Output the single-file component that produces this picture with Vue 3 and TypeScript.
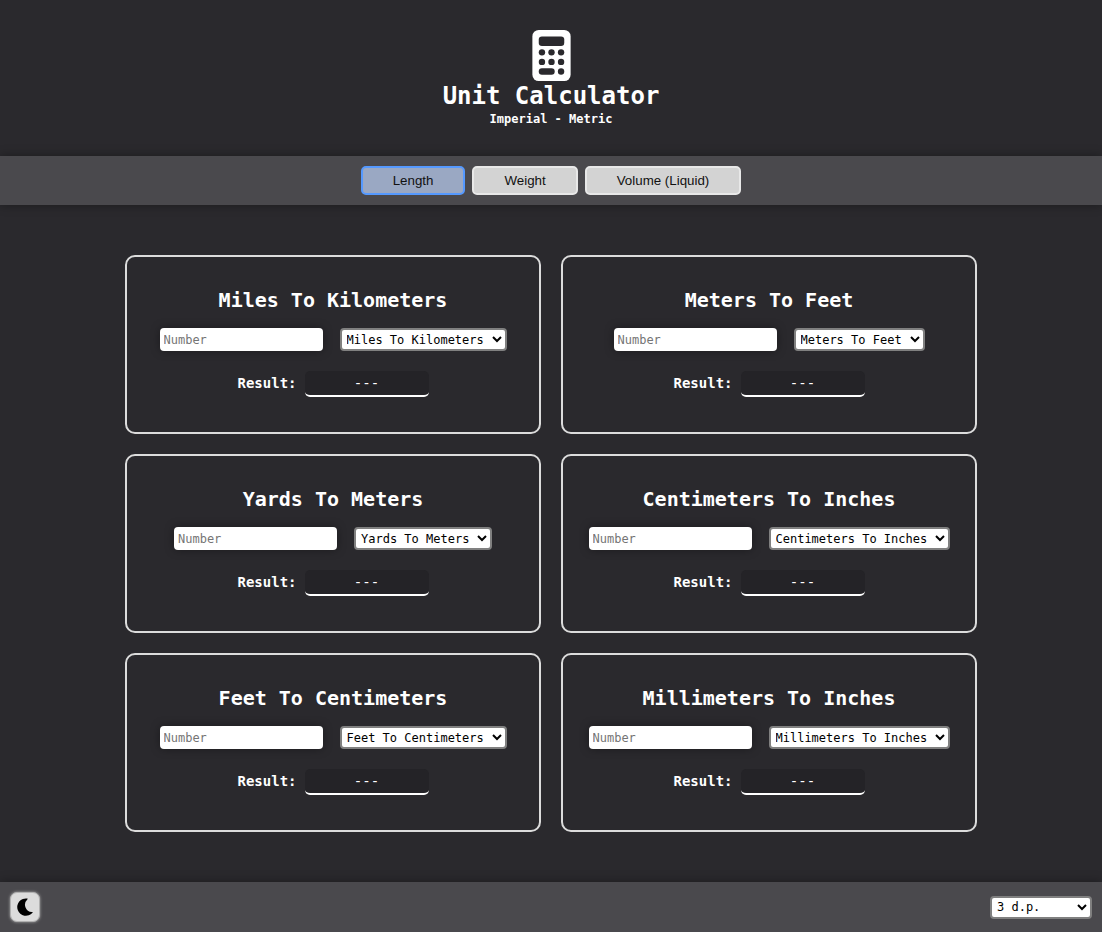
<script setup lang="ts">
import { computed, reactive, ref } from 'vue'

interface Conversion {
  from: string
  to: string
  factor: number
}

interface Card extends Conversion {
  value: string
  reversed: boolean
}

const tables: Record<string, Conversion[]> = {
  Length: [
    { from: 'Miles', to: 'Kilometers', factor: 1.609344 },
    { from: 'Meters', to: 'Feet', factor: 3.280839895 },
    { from: 'Yards', to: 'Meters', factor: 0.9144 },
    { from: 'Centimeters', to: 'Inches', factor: 0.3937007874 },
    { from: 'Feet', to: 'Centimeters', factor: 30.48 },
    { from: 'Millimeters', to: 'Inches', factor: 0.03937007874 },
  ],
  Weight: [
    { from: 'Pounds', to: 'Kilograms', factor: 0.45359237 },
    { from: 'Ounces', to: 'Grams', factor: 28.349523125 },
  ],
  'Volume (Liquid)': [
    { from: 'Gallons', to: 'Liters', factor: 4.54609 },
    { from: 'Pints', to: 'Milliliters', factor: 568.26125 },
  ],
}

const cards = reactive<Record<string, Card[]>>({})
for (const name of Object.keys(tables)) {
  cards[name] = tables[name].map((c) => ({ ...c, value: '', reversed: false }))
}

const categories = Object.keys(tables)
const active = ref('Length')
const decimals = ref(3)
const light = ref(false)
const visible = computed(() => cards[active.value])

function label(card: Card, reversed: boolean): string {
  return reversed ? `${card.to} To ${card.from}` : `${card.from} To ${card.to}`
}

function result(card: Card): string {
  const n = Number(card.value)
  if (card.value === '' || Number.isNaN(n)) return '---'
  return (card.reversed ? n / card.factor : n * card.factor).toFixed(decimals.value)
}
</script>

<template>
  <div class="page" :class="{ light }">
    <header class="header">
      <svg class="logo" viewBox="0 0 384 512" aria-hidden="true">
        <rect width="384" height="512" rx="64" fill="currentColor" />
        <g class="keys">
          <rect x="64" y="64" width="256" height="96" rx="32" />
          <circle cx="96" cy="224" r="32" />
          <circle cx="192" cy="224" r="32" />
          <circle cx="288" cy="224" r="32" />
          <circle cx="96" cy="320" r="32" />
          <circle cx="192" cy="320" r="32" />
          <circle cx="288" cy="320" r="32" />
          <rect x="64" y="384" width="160" height="64" rx="32" />
          <circle cx="288" cy="416" r="32" />
        </g>
      </svg>
      <h1>Unit Calculator</h1>
      <p>Imperial - Metric</p>
    </header>

    <nav class="tabs">
      <button
        v-for="name in categories"
        :key="name"
        type="button"
        class="tab"
        :class="{ selected: name === active }"
        @click="active = name"
      >{{ name }}</button>
    </nav>

    <main class="grid">
      <section v-for="(card, i) in visible" :key="active + i" class="card">
        <h2>{{ label(card, card.reversed) }}</h2>
        <div class="controls">
          <input v-model="card.value" class="number" type="text" inputmode="decimal" placeholder="Number" :aria-label="label(card, card.reversed)" />
          <select v-model="card.reversed" class="select" aria-label="Conversion">
            <option :value="false">{{ label(card, false) }}</option>
          </select>
        </div>
        <div class="result">
          <label :for="'result-' + i">Result:</label>
          <output :id="'result-' + i">{{ result(card) }}</output>
        </div>
      </section>
    </main>

    <footer class="footer">
      <button type="button" class="theme" aria-label="Toggle theme" @click="light = !light">
        <svg viewBox="0 0 16 18" aria-hidden="true">
          <path d="M10.300 .5A8.700 8.700 0 1 0 15.500 14.800C15.900 14.300 15.500 13.900 14.900 14A7.300 7.300 0 0 1 10.300 1.400C10.900 1 10.800 .6 10.300 .5z" />
        </svg>
      </button>
      <select v-model="decimals" class="select places" aria-label="Decimal places">
        <option v-for="n in 6" :key="n" :value="n">{{ n }} d.p.</option>
      </select>
    </footer>
  </div>
</template>

<style>
body {
  margin: 0;
}
</style>

<style scoped>
.page {
  --bg: #2a292d;
  --bar: #4a494d;
  --text: #ffffff;
  --field: #242327;
  display: flex;
  flex-direction: column;
  min-height: 100vh;
  background: var(--bg);
  color: var(--text);
  font-family: 'DejaVu Sans Mono', monospace;
}

.page.light {
  --bg: #f2f2f4;
  --bar: #c8c8cc;
  --text: #222226;
  --field: #e4e4e8;
}

.header {
  display: flex;
  flex-direction: column;
  align-items: center;
  padding: 30px 0 28px;
}

.logo {
  width: 39px;
  height: 51px;
}

.keys {
  fill: var(--bg);
}

h1 {
  margin: 0;
  font-size: 24px;
  line-height: 30px;
}

.header p {
  margin: 0;
  font-size: 12px;
  font-weight: bold;
  line-height: 17px;
}

.tabs {
  display: flex;
  justify-content: center;
  gap: 7px;
  padding: 10px;
  background: var(--bar);
  box-shadow: 0 0 10px rgba(0, 0, 0, 0.35);
}

.tab {
  height: 29px;
  padding: 0 30px;
  border: 2px solid #e8e8e8;
  border-radius: 5px;
  background: #d3d3d3;
  color: #111111;
  font-family: 'Liberation Sans', Arial, sans-serif;
}

.tab.selected {
  border-color: #5599ff;
  background: #9aa8c3;
}

.grid {
  display: grid;
  grid-template-columns: repeat(auto-fit, minmax(380px, 1fr));
  gap: 20px;
  box-sizing: border-box;
  width: 100%;
  max-width: 852px;
  margin: 0 auto;
  padding: 50px 0;
}

.card {
  display: flex;
  flex-direction: column;
  align-items: center;
  padding: 30px 10px 35px;
  border: 2px solid #dcdcdc;
  border-radius: 10px;
}

h2 {
  margin: 0 0 15px;
  font-size: 20px;
  line-height: 26px;
}

.controls {
  display: flex;
  justify-content: center;
  gap: 17px;
  margin-bottom: 20px;
}

.number {
  box-sizing: border-box;
  width: 163px;
  height: 23px;
  padding: 1px 4px;
  border: 0;
  border-radius: 4px;
  background: #ffffff;
  color: #000000;
  font-family: inherit;
  font-size: 12px;
  box-shadow: 0 0 10px rgba(0, 0, 0, 0.35);
}

.number::placeholder {
  color: #757575;
}

.select {
  box-sizing: border-box;
  height: 23px;
  padding: 0 4px 0 1px;
  border: 2px solid #808080;
  border-radius: 4px;
  background-color: #ffffff;
  color: #000000;
  font-family: inherit;
  font-size: 12px;
}

.result {
  display: flex;
  align-items: center;
  gap: 8px;
}

.result label {
  padding-bottom: 2px;
  font-size: 14px;
  font-weight: bold;
}

.result output {
  box-sizing: border-box;
  width: 124px;
  height: 26px;
  border-bottom: 2px solid var(--text);
  border-radius: 5px;
  background: var(--field);
  font-size: 14px;
  line-height: 24px;
  text-align: center;
}

.footer {
  display: flex;
  align-items: center;
  justify-content: space-between;
  box-sizing: border-box;
  height: 50px;
  margin-top: auto;
  padding: 0 10px;
  background: var(--bar);
  box-shadow: 0 0 10px rgba(0, 0, 0, 0.35);
}

.theme {
  display: flex;
  align-items: center;
  justify-content: center;
  width: 30px;
  height: 30px;
  padding: 0;
  border: 1px solid #b0b0b0;
  border-radius: 7px;
  background: #dcdcdc;
  color: #000000;
  box-shadow: 0 0 3px #b0b0b0;
}

.theme svg {
  width: 16px;
  height: 18px;
  fill: currentColor;
}

.places {
  width: 102px;
}
</style>
